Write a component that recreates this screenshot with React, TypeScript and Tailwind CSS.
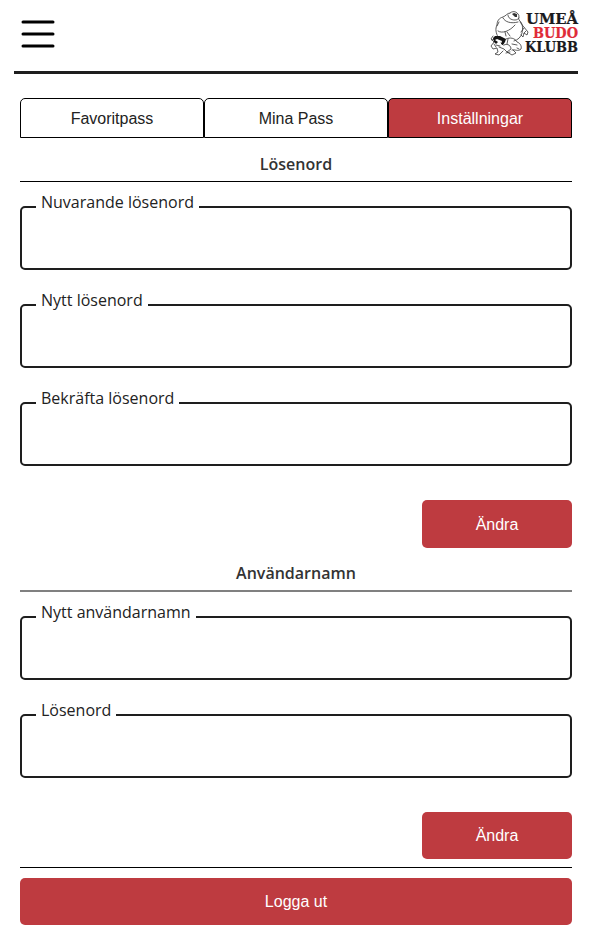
import React from "react";

const SANS = "font-['Liberation_Sans',Arial,sans-serif]";

function MenuIcon() {
  return (
    <svg width="34" height="28" viewBox="0 0 34 28" fill="none" stroke="#000" strokeWidth="3" strokeLinecap="round" aria-hidden="true">
      <path d="M2 2H32M2 14H32M2 26H32" />
    </svg>
  );
}

function Logo() {
  return (
    <svg width="88" height="48" viewBox="0 0 88 48" className="overflow-visible" role="img" aria-label="Umeå Budo Klubb">
      <g fill="none" stroke="#333" strokeWidth="0.8" strokeLinecap="round" strokeLinejoin="round">
        <path d="M20 3C17 3 16 6 13 7C9 8 7 11 7 15C5 19 6 23 8 27" />
        <path d="M20 3C22 1 26 1 28 4C30 6 28 8 29 10C33 13 33 19 32 23C31 27 28 30 24 31" />
        <path d="M18 5C18 8 21 10 25 10C27 10 28 9 29 8M13 8C15 12 21 14 28 12" />
        <path d="M8 21C12 24 20 21 25 15M15 22L16 26M17 22L20 26M9 12L7 16" />
        <path d="M30 12L33 16L38 22L37 25L34 23L33 27L31 25M34 18L31 22M36 21L34 23" />
        <path d="M16 29C20 27 25 28 27 32C30 33 32 36 31 39C28 42 25 39 22 40" />
        <path d="M3 26L1 29L4 32L1 36L3 39L7 38L8 42L5 44L9 45L13 41" />
        <path d="M14 35C18 33 21 36 21 39L17 42L22 45L26 43L23 40M18 29L17 34M22 34L27 35M9 37L14 39L17 42M6 35L10 36" />
        <path d="M4 34L6 37M2 30L4 29M11 33L13 35M27 38L29 39M16 43L20 42" />
      </g>
      <path d="M3 28L5 26L10 26L16 29L15 32L13 35L11 34L12 31L7 29L5 30L8 32L6 34L4 32Z" fill="#151515" />
      <path d="M22 4L24 3L27 4L27 7L25 7Z" fill="#333" />
      <g fontFamily="'DejaVu Serif', serif" fontWeight="700" fontSize="14.500" strokeWidth="0.2">
        <text x="36" y="14.200" textLength="52" lengthAdjust="spacingAndGlyphs" fill="#1a1a1d" stroke="#1a1a1d">UMEÅ</text>
        <text x="43" y="28" textLength="45" lengthAdjust="spacingAndGlyphs" fill="#e02b38" stroke="#e02b38">BUDO</text>
        <text x="35" y="42" textLength="53" lengthAdjust="spacingAndGlyphs" fill="#1a1a1d" stroke="#1a1a1d">KLUBB</text>
      </g>
    </svg>
  );
}

function Tab({ label, active = false }: { label: string; active?: boolean }) {
  return (
    <button className={`h-10 flex-1 rounded-t-[5px] border border-black pt-0.5 text-base ${SANS} ${active ? "bg-[#be3b40] text-white" : "bg-white text-[#222]"}`}>
      {label}
    </button>
  );
}

function Heading({ children }: { children: React.ReactNode }) {
  return <h2 className="text-center text-base leading-6 font-semibold text-[#333]">{children}</h2>;
}

function Field({ label }: { label: string }) {
  return (
    <div className="relative h-16">
      <input type="password" aria-label={label} className="h-full w-full rounded-[5px] border-2 border-[#1e1e1e] bg-white px-4 outline-none" />
      <span className="absolute -top-4 left-4 bg-white px-[5px] text-base leading-6 text-[#222]">{label}</span>
    </div>
  );
}

function ChangeButton() {
  return (
    <button className={`h-[47.5px] w-[150px] self-end rounded-[5px] bg-[#be3b40] pt-0.5 text-base text-white ${SANS}`}>Ändra</button>
  );
}

export default function App() {
  return (
    <div className="h-[946px] bg-white font-['Open_Sans',sans-serif]">
      <header className="mx-[14px] flex h-[74px] items-start justify-between border-b-3 border-[#1e1e1e] pl-[7px]">
        <button aria-label="Meny" className="mt-5">
          <MenuIcon />
        </button>
        <div className="mt-[10px]">
          <Logo />
        </div>
      </header>
      <main className="mx-5 flex flex-col pt-6">
        <nav className="flex">
          <Tab label="Favoritpass" />
          <Tab label="Mina Pass" />
          <Tab label="Inställningar" active />
        </nav>
        <section className="mt-[14px] flex flex-col">
          <Heading>Lösenord</Heading>
          <div className="mt-[5px] h-px bg-black" />
          <div className="mt-6 flex flex-col gap-[34px]">
            <Field label="Nuvarande lösenord" />
            <Field label="Nytt lösenord" />
            <Field label="Bekräfta lösenord" />
            <ChangeButton />
          </div>
        </section>
        <section className="mt-[13.5px] flex flex-col">
          <Heading>Användarnamn</Heading>
          <div className="mt-[5px] h-[2px] bg-[#808080]" />
          <div className="mt-[23.5px] flex flex-col gap-[34px]">
            <Field label="Nytt användarnamn" />
            <Field label="Lösenord" />
            <ChangeButton />
          </div>
        </section>
        <div className="mt-2 h-px bg-black" />
        <button className={`mt-[10px] h-[47px] rounded-[5px] bg-[#be3b40] text-base text-white ${SANS}`}>Logga ut</button>
      </main>
    </div>
  );
}
